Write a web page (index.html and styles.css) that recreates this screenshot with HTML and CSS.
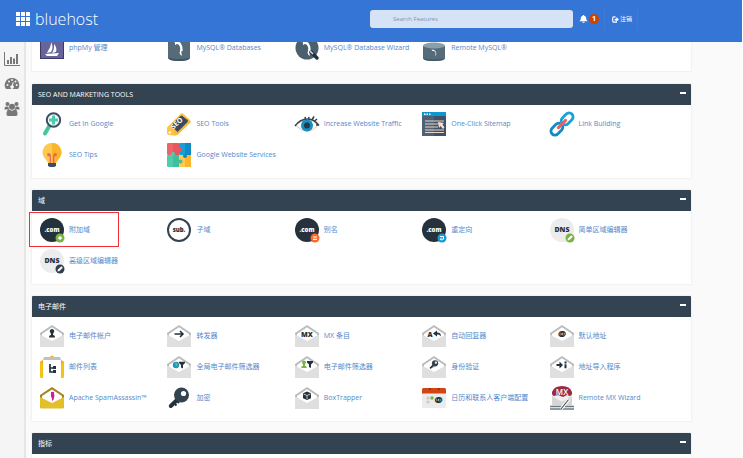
FILE: index.html
```html
<!DOCTYPE html>
<html lang="zh-CN">
<head>
<meta charset="utf-8">
<title>bluehost</title>
<link rel="stylesheet" href="styles.css">
</head>
<body>
<svg class="defs" aria-hidden="true">
  <symbol id="envelope" viewBox="0 0 24 24">
    <path d="M0 9 12 1l12 8v13.500H0z" fill="#bcbcbc"/>
    <path d="M2 10 12 3.300 22 10v7H2z" fill="#fff"/>
    <path d="M0 10.500 12 17l12-6.500V21.500a1.200 1.200 0 0 1-1.200 1.200H1.200A1.200 1.200 0 0 1 0 21.500z" fill="#dfdfdf"/>
  </symbol>
  <symbol id="key" viewBox="0 0 24 24">
    <path d="M12 12 3.800 20" stroke="#22323d" stroke-width="4" stroke-linecap="round" fill="none"/>
    <path d="m7 17 2.500 2.500M9.500 14.500 12 17" stroke="#22323d" stroke-width="2" fill="none"/>
    <circle cx="14.500" cy="9" r="7.500" fill="#34434f"/>
    <circle cx="16.500" cy="7.500" r="2.600" fill="#fff"/>
  </symbol>
  <symbol id="domain" viewBox="0 0 24 24">
    <circle cx="12" cy="12" r="12" fill="#25323c"/>
    <text x="12" y="14" text-anchor="middle" class="mark light">.com</text>
  </symbol>
  <symbol id="dns" viewBox="0 0 24 24">
    <circle cx="12" cy="12" r="12" fill="#ececec"/>
    <text x="12" y="14" text-anchor="middle" class="mark dns">DNS</text>
  </symbol>
  <symbol id="pencil" viewBox="0 0 10 10">
    <path d="M2.500 7.500 3 5.500 6.300 2.200l1.500 1.500L4.500 7z" fill="#fff"/>
  </symbol>
  <symbol id="funnel" viewBox="0 0 6 8"><path d="M0 0h6v1.500L4 3.500V7L2 6V3.500L0 1.500z" fill="#25323c"/></symbol>
  <symbol id="pawn" viewBox="0 0 8 9"><path d="M4 0a2.200 2.200 0 0 1 1.300 4L5 6c1.500 0 2 1 2 2.500H1C1 7 1.500 6 3 6l-.3-2A2.200 2.200 0 0 1 4 0z"/></symbol>
  <symbol id="dolphin" viewBox="0 0 24 24"><path d="M7 5c4-1 7 1 8 5 1 2 0 3 1 5-2-1-2 1-1 5-2-1-3-3-2-5 1-4-1-7-3-7-1 0-1 1-2 1 0-2 0-3-1-4z" fill="#fff"/></symbol>
</svg>

<header class="topbar">
  <a class="brand" href="#">
    <svg class="brand-grid" viewBox="0 0 14 14" aria-hidden="true"><path fill="#fff" d="M0 0h4v4H0zM5 0h4v4H5zM10 0h4v4h-4zM0 5h4v4H0zM5 5h4v4H5zM10 5h4v4h-4zM0 10h4v4H0zM5 10h4v4H5zM10 10h4v4h-4z"/></svg>
    <span>bluehost</span>
  </a>
  <input class="search" type="search" placeholder="Search Features" aria-label="Search Features">
  <button class="alerts" type="button" aria-label="1">
    <svg viewBox="0 0 10 10" aria-hidden="true"><path fill="#fff" d="M5 0.500c.7 0 .8.5.8.8C7.500 1.700 8 3 8 4.500c0 1.500.7 2.300 1.500 3H.5c.8-.7 1.500-1.500 1.500-3C2 3 2.500 1.700 4.200 1.300 4.200 1 4.300.5 5 .5zM3.700 8h2.600a1.300 1.300 0 0 1-2.600 0z"/></svg>
    <span class="badge">1</span>
  </button>
  <a class="logout" href="#">
    <svg viewBox="0 0 8 8" aria-hidden="true"><path fill="none" stroke="#fff" stroke-width="1.300" d="M4 1H2Q.8 1 .8 2.200v3.600Q.8 7 2 7h3V6"/><path fill="#fff" d="M3 3h2V1.200L8 4 5 6.500V5H3z"/></svg>
    <span>注销</span>
  </a>
</header>

<div class="shell">
  <nav class="sidebar">
    <a href="#" aria-label="Statistics"><svg viewBox="0 0 16 14"><path fill="none" stroke="#777" d="M.5 0v13.500H16"/><path fill="#777" d="M3 8h2v4H3zM6 5h2v7H6zM9 6.500h2V12H9zM12 2h2v10h-2z"/></svg></a>
    <a href="#" aria-label="Dashboard"><svg viewBox="0 0 16 14"><path fill="#777" d="M8 1a7 7 0 0 1 6 11H2A7 7 0 0 1 8 1z"/><g fill="#f5f5f5"><circle cx="3.500" cy="8" r="1"/><circle cx="5" cy="4.500" r="1"/><circle cx="8" cy="3" r="1"/><circle cx="11.500" cy="4.500" r="1"/><circle cx="12.700" cy="8" r="1"/><path d="m8.800 5 1 .3-.9 3.200a1.700 1.700 0 1 1-1-.2z"/></g></svg></a>
    <a href="#" aria-label="Users"><svg viewBox="0 0 16 14"><g fill="#777"><circle cx="3.500" cy="2" r="2"/><circle cx="12.500" cy="2" r="2"/><circle cx="8" cy="4.700" r="3"/><path d="M.5 7.500c0-2 .5-3 1.500-3l2.500.3c0 1 .2 1.800.8 2.700zM15.500 7.500c0-2-.5-3-1.500-3l-2.500.3c0 1-.2 1.800-.8 2.700zM2.500 12c0-3 .8-4.500 2.700-4.500C7 9 9 9 10.800 7.500c1.900 0 2.700 1.500 2.700 4.500 0 1-.5 2-1.700 2H4.200c-1.200 0-1.700-1-1.700-2z"/></g></svg></a>
  </nav>

  <main class="content">
    <section class="panel">
      <div class="items">
        <a href="#"><svg viewBox="0 0 24 24"><path d="M0 0h24v23H0z" fill="#3b3a66"/><path d="M1 1h22v21H1z" fill="#66649a"/><path d="M11 6c2 4 2 7 0 10l-4 1c2-4 4-6 4-11zM14 8c2 2 3 5 2 8l-4 1c2-3 2-5 2-9zM5 18l14-1-2 3H7z" fill="#fff"/></svg><span>phpMy 管理</span></a>
        <a href="#"><svg viewBox="0 0 24 24"><path d="M1 4h22v17q0 4-11 4t-11-4z" fill="#566b7a"/><path d="M1 21q3 2 11 2t11-2v1q-1 3-11 3T1 22z" fill="#3f5564"/><use href="#dolphin"/></svg><span>MySQL® Databases</span></a>
        <a href="#"><svg viewBox="0 0 24 24"><circle cx="12" cy="12" r="11.500" fill="#4b606f"/><use href="#dolphin"/><path d="m16 16 6 6" stroke="#25323c" stroke-width="3.500" stroke-linecap="round"/><path d="m15 15 3 3" stroke="#dce3e8" stroke-width="1.500"/></svg><span>MySQL® Database Wizard</span></a>
        <a href="#"><svg viewBox="0 0 24 24"><path d="M1 10h22v12q0 3-11 3T1 22z" fill="#566b7a"/><path d="M1 22q3 1.500 11 1.500T23 22q0 3-11 3T1 22z" fill="#3f5564"/><ellipse cx="12" cy="9.500" rx="11" ry="3" fill="#8aa0a8"/><path d="M9.500 13.500c4 0 6 3 4 7v-4q0-2-3-1.500z" fill="#fff"/></svg><span>Remote MySQL®</span></a>
      </div>
    </section>

    <section class="panel">
      <header><h2>SEO AND MARKETING TOOLS</h2><button type="button" aria-label="Collapse"></button></header>
      <div class="items">
        <a href="#"><svg viewBox="0 0 24 24"><path d="m9 14.500-4 7" stroke="#41c99e" stroke-width="4" stroke-linecap="round"/><circle cx="13.500" cy="8" r="6.700" fill="#f2f9fb" stroke="#3e4d60" stroke-width="2"/><path d="M12 3.500h3v3h3v3h-3v3h-3v-3H9v-3h3z" fill="#4bcbaa"/></svg><span>Get In Google</span></a>
        <a href="#"><svg viewBox="0 0 24 24"><path d="m0 15.500 14-14q1-1 2 0l7 6.500q1.500 1.500 0 3L10 23q-1 .8-2 .8L2 23q-2 0-2-2z" fill="#fdc43f"/><path d="m11 22.500 12.500-12.500-2.500-4L6 21z" fill="#fbb62f"/><path d="m3.500 13.500 10-9.500q1-1 2 0l5 4q1 1 0 2L10.500 20z" fill="#3c4a5c"/><text x="6.500" y="17.500" transform="rotate(-43 6.500 17.500)" class="mark seo">SEO</text><circle cx="2.800" cy="20.500" r="1.200" fill="#fff"/></svg><span>SEO Tools</span></a>
        <a href="#"><svg viewBox="0 0 24 24"><path d="M1 13.500Q12 1 23 13.500 12 25 1 13.500z" fill="#fff" stroke="#e8c6b8"/><path d="M0 14Q5 7 13 7q6 0 11 6.500M10.500 7 10 5m3.500 2 .5-2M17 8l2-3.500m0 5L22 7m-1 6h3" fill="none" stroke="#34434f" stroke-width="1.600"/><circle cx="12" cy="13.500" r="6" fill="#138fc5"/><circle cx="12" cy="13.500" r="3" fill="#273744"/></svg><span>Increase Website Traffic</span></a>
        <a href="#"><svg viewBox="0 0 24 24"><path d="M0 0h24v24H0z" fill="#4e6277"/><path d="M12 3h12v21H12z" fill="#3f5067"/><path d="M0 0h24v4H0z" fill="#0b98ce"/><path d="M2 1.500h1.500V3H2zM4.500 1.500H6V3H4.500zM7 1.500h1.500V3H7z" fill="#fff"/><path d="M3 9h19M3 12h13M3 15h13M3 18h19M3 20.500h19" stroke="#ead3c5" stroke-width="1.200"/><path d="m16 10 6 1-1.500 1.500 2 3-1.500 1.500-2.500-3-1.500 2z" fill="#f9ded1"/></svg><span>One-Click Sitemap</span></a>
        <a href="#"><svg viewBox="0 0 24 24"><g fill="none" stroke-width="2.800" transform="rotate(-45 12 12)"><rect x="-2" y="8" width="13.500" height="8" rx="4" stroke="#0f8dc1"/><rect x="12.500" y="8" width="13.500" height="8" rx="4" stroke="#17a3d8"/><path d="M7 12h10" stroke="#e85f69" stroke-width="3.200" stroke-linecap="round"/></g></svg><span>Link Building</span></a>
        <a href="#"><svg viewBox="0 0 24 24"><path d="M12 0a9.300 9.300 0 0 1 6.500 16l-2.500 4H8l-2.500-4A9.300 9.300 0 0 1 12 0z" fill="#fdca4e"/><path d="M12 0a9.300 9.300 0 0 1 6.500 16L16 20h-4z" fill="#fbb52c"/><path d="M10.300 20v-8.500m3.400 8.500v-8.500M8 11h1.500v1.500H8zm6.500 0H16v1.500h-1.500z" fill="none" stroke="#ea655d" stroke-width="1.300"/><path d="M8 20h8v3l-2 1h-4l-2-1z" fill="#3e4d60"/></svg><span>SEO Tips</span></a>
        <a href="#"><svg viewBox="0 0 24 24"><rect width="12" height="12" rx="1" fill="#ec646c"/><path d="M6 0h6v12H6z" fill="#e8575f"/><rect x="12" width="12" height="12" rx="1" fill="#14a0d8"/><path d="M18 0h6v12h-6z" fill="#0e8cc2"/><rect y="12" width="12" height="12" rx="1" fill="#4dcdad"/><path d="M6 12h6v12H6z" fill="#40bf9c"/><rect x="12" y="12" width="12" height="12" rx="1" fill="#fdc94e"/><path d="M18 12h6v12h-6z" fill="#fbb52e"/><circle cx="13.500" cy="6.500" r="2" fill="#e8575f"/><circle cx="6" cy="11" r="2" fill="#4dcdad"/><circle cx="18" cy="13" r="2" fill="#0e8cc2"/><circle cx="13.500" cy="18.500" r="2" fill="#40bf9c"/></svg><span>Google Website Services</span></a>
      </div>
    </section>

    <section class="panel">
      <header><h2>域</h2><button type="button" aria-label="Collapse"></button></header>
      <div class="items">
        <a href="#" class="highlighted"><svg viewBox="0 0 24 24"><use href="#domain"/><circle cx="20" cy="20" r="4.500" fill="#7ab344"/><path d="M20 18v4m-2-2h4" stroke="#fff" stroke-width="1.300"/></svg><span>附加域</span></a>
        <a href="#"><svg viewBox="0 0 24 24"><circle cx="12" cy="12" r="11" fill="#fff" stroke="#34434f" stroke-width="2"/><text x="12" y="14" text-anchor="middle" class="mark">sub.</text></svg><span>子域</span></a>
        <a href="#"><svg viewBox="0 0 24 24"><use href="#domain"/><circle cx="20" cy="20" r="4.500" fill="#fa6b2b"/><path d="M18 19h4m-4 2.300h4" stroke="#fff" stroke-width="1.200"/></svg><span>别名</span></a>
        <a href="#"><svg viewBox="0 0 24 24"><use href="#domain"/><circle cx="20" cy="20" r="4.500" fill="#179bd7"/><path d="M18 18.500h3.500v2.700H18.500m1-1.200-1.200 1.200 1.200 1.200" fill="none" stroke="#fff"/></svg><span>重定向</span></a>
        <a href="#"><svg viewBox="0 0 24 24"><use href="#dns"/><circle cx="20" cy="20" r="4.500" fill="#7ab344"/><use href="#pencil" x="15" y="15" width="10" height="10"/></svg><span>简单区域编辑器</span></a>
        <a href="#"><svg viewBox="0 0 24 24"><use href="#dns"/><circle cx="20" cy="20" r="4.500" fill="#2f3f4b"/><use href="#pencil" x="15" y="15" width="10" height="10"/></svg><span>高级区域编辑器</span></a>
      </div>
    </section>

    <section class="panel">
      <header><h2>电子邮件</h2><button type="button" aria-label="Collapse"></button></header>
      <div class="items">
        <a href="#"><svg viewBox="0 0 24 24"><use href="#envelope"/><use href="#pawn" x="8" y="5" width="8" height="9" fill="#25323c"/></svg><span>电子邮件帐户</span></a>
        <a href="#"><svg viewBox="0 0 24 24"><use href="#envelope"/><path d="M7.500 10H15m-2-3 3 3-3 3" fill="none" stroke="#25323c" stroke-width="1.600"/></svg><span>转发器</span></a>
        <a href="#"><svg viewBox="0 0 24 24"><use href="#envelope"/><text x="12" y="12.500" text-anchor="middle" class="mark mx">MX</text></svg><span>MX 条目</span></a>
        <a href="#"><svg viewBox="0 0 24 24"><use href="#envelope"/><text x="5.500" y="12.500" class="mark mx">A</text><path d="m11 9.500 4-3v2c3 0 4 1.500 4 4-1-1.500-2-2-4-2v2z" fill="#25323c"/></svg><span>自动回复器</span></a>
        <a href="#"><svg viewBox="0 0 24 24"><use href="#envelope"/><text x="12" y="12.500" text-anchor="middle" class="mark at">@</text></svg><span>默认地址</span></a>
        <a href="#"><svg viewBox="0 0 24 24"><path d="m8 3 4-2.500L16 3v3H8z" fill="#f0a52c"/><path d="M0 8q0-2 3-3h1v18H1.500Q0 23 0 21.500zM24 8q0-2-3-3h-1v18h2.500q1.500 0 1.500-1.500z" fill="#f1c40f"/><path d="M0 8q0-2 4-3v3zM24 8q0-2-4-3v3z" fill="#f0a52c"/><path d="M3 3h18v20H3z" fill="#fff"/><path d="M4 2h16l1 3H3z" fill="#bfc2c4"/><path d="M10 9v8h4m-4-4h4" fill="none" stroke="#25323c" stroke-width="1.700"/><path d="M13 11h3v3h-3zM13 15h3v3h-3z" fill="#25323c"/></svg><span>邮件列表</span></a>
        <a href="#"><svg viewBox="0 0 24 24"><use href="#envelope"/><circle cx="9" cy="10" r="3.200" fill="#1796c5"/><path d="M8 7.500 11 9 9 12z" fill="#6dbb78"/><use href="#funnel" x="12" y="6.500" width="6" height="8"/></svg><span>全局电子邮件筛选器</span></a>
        <a href="#"><svg viewBox="0 0 24 24"><use href="#envelope"/><use href="#pawn" x="5" y="5.500" width="8" height="8" fill="#7ab344"/><use href="#funnel" x="12" y="6" width="6" height="8"/></svg><span>电子邮件筛选器</span></a>
        <a href="#"><svg viewBox="0 0 24 24"><use href="#envelope"/><use href="#key" x="7" y="4.500" width="10" height="10"/></svg><span>身份验证</span></a>
        <a href="#"><svg viewBox="0 0 24 24"><use href="#envelope"/><path d="M6.500 9H9.500V6.500L13 10l-3.500 3.500V11h-3zM14.500 6.500h2v2h-2zM14.500 9.300h2v4h-2z" fill="#25323c"/></svg><span>地址导入程序</span></a>
        <a href="#"><svg viewBox="0 0 24 24"><path d="m0 9 12-8 12 8v13H0z" fill="#a68122"/><path d="m2 10 10-6.500L22 10v7H2z" fill="#fff"/><path d="m0 11 12 6 12-6v10.500q0 1-1.200 1H1.200q-1.200 0-1.200-1z" fill="#e3bf29"/><path d="M11 6q4-1 3 2 1 1 0 4 0 2-2 3V12q-1 0-1-2z" fill="#d6189a"/></svg><span>Apache SpamAssassin™</span></a>
        <a href="#"><svg viewBox="0 0 24 24"><use href="#key"/></svg><span>加密</span></a>
        <a href="#"><svg viewBox="0 0 24 24"><use href="#envelope"/><path d="m12 5.500 4 1.700v5L12 14l-4-1.800v-5z" fill="#25323c"/><path d="m8.500 8 3.500 1.500L15.500 8M12 9.500V13" fill="none" stroke="#fff" stroke-width=".7"/></svg><span>BoxTrapper</span></a>
        <a href="#"><svg viewBox="0 0 24 24"><rect y="2" width="24" height="20" rx="1.500" fill="#ebebeb"/><path d="M0 3.500Q0 2 1.500 2h21Q24 2 24 3.500V7.500H0z" fill="#d34413"/><path d="M7 2h1.500v2H7zM16 2h1.500v2H16z" fill="#842b0c"/><circle cx="6" cy="12" r="1.600" fill="#c9c9c9"/><circle cx="6" cy="16" r="1.600" fill="#c9c9c9"/><circle cx="10" cy="12" r="1.700" fill="#7ab344"/><text x="16.500" y="16.500" text-anchor="middle" class="mark at">@</text></svg><span>日历和联系人客户端配置</span></a>
        <a href="#"><svg viewBox="0 0 24 24"><path d="M2 8 12 3l10 5v12H2z" fill="#efefef"/><path d="m2 10 10 6 10-6v9H2z" fill="#d4d6d7"/><path d="M2 6Q4 0 12 0t10 6q.5 3-2 4l-3-1-4 2-5-2-4 1q-2.500-1-2-4z" fill="#9b2b42"/><text x="12" y="8.500" text-anchor="middle" class="mark wizard">MX</text><path d="M0 20.500h24M0 23h24" stroke="#6c7a80" stroke-width="1.500"/><path d="m11 23 8-10" stroke="#fff" stroke-width="3"/><path d="m11 23 8-10" stroke="#46545b" stroke-width="1.200"/><path d="m18 11 3 2m-3 1 4-3" stroke="#ddd"/></svg><span>Remote MX Wizard</span></a>
      </div>
    </section>

    <section class="panel">
      <header><h2>指标</h2><button type="button" aria-label="Collapse"></button></header>
      <div class="items"></div>
    </section>
  </main>
</div>
</body>
</html>
```

FILE: styles.css
```css
* { box-sizing: border-box; }

html { background: #fff; }

body {
  height: 100vh;
  margin: 0;
  padding-right: 1px;
  overflow: hidden;
  font: 7px/10px "Open Sans", "Noto Sans CJK SC", sans-serif;
  color: #5189cb;
}

a { color: inherit; text-decoration: none; }
button { padding: 0; border: 0; background: none; font: inherit; }
svg { display: block; flex: none; overflow: visible; }
.defs { position: absolute; width: 0; height: 0; }

.topbar {
  position: fixed;
  inset: 0 1px auto 0;
  z-index: 2;
  display: flex;
  align-items: center;
  height: 42px;
  padding: 0 104px 4px 16px;
  background: #3575d6;
  color: #fff;
}

.brand {
  display: flex;
  align-items: center;
  gap: 5px;
  margin-right: auto;
  font-size: 16px;
  font-weight: 300;
  line-height: 24px;
}
.brand-grid { width: 14px; height: 14px; }

.search {
  width: 203px;
  height: 18px;
  padding: 0 23px;
  border: 0;
  border-radius: 3px;
  background: #d6e2f5;
  font: inherit;
  font-size: 6px;
  appearance: none;
}
.search::placeholder { color: #8392ac; opacity: 1; }

.alerts {
  display: flex;
  align-items: center;
  gap: 1px;
  padding: 0 5px 0 6px;
  color: #fff;
}
.alerts svg { width: 9px; height: 10px; }
.badge {
  width: 10px;
  border-radius: 5px;
  background: #cf4200;
  font-size: 7px;
  font-weight: 700;
}

.logout {
  display: flex;
  align-items: center;
  gap: 1px;
  height: 24px;
  padding: 0 5px 0 7px;
  border: solid #3e7ad6;
  border-width: 0 1px;
  font-size: 6px;
}
.logout svg { width: 7px; height: 7px; }

.shell {
  display: flex;
  height: 100%;
  overflow: hidden;
  background: #fafafa;
}

.sidebar {
  display: flex;
  flex: none;
  flex-direction: column;
  gap: 11px;
  width: 26px;
  padding: 52px 0 0 4px;
  border-right: 2px solid #e6e6e6;
  background: #f5f5f5;
}
.sidebar svg { width: 16px; height: 14px; }

.content {
  flex: 1;
  min-width: 0;
  padding: 29px 51px 0 6px;
}

.panel {
  margin-bottom: 12px;
  background: #fff;
  box-shadow: 0 0 1px 1px #f2f2f2;
}
.panel:first-child { margin-bottom: 13px; }

.panel > header {
  display: flex;
  align-items: center;
  justify-content: space-between;
  height: 21px;
  padding: 0 5px 0 6px;
  border-radius: 1px 1px 0 0;
  background: #334352;
  color: #fff;
}
.panel h2 { margin: 0; font: inherit; }
.panel header button {
  width: 6px;
  height: 2px;
  margin-bottom: 3px;
  background: #fff;
}

.items {
  display: grid;
  grid-template-columns: repeat(5, minmax(0, 1fr));
  row-gap: 7px;
  padding: 7px 14px 11px 8px;
}
.items a {
  display: flex;
  align-items: center;
  gap: 5px;
  height: 24px;
  white-space: nowrap;
}
.items a > svg { width: 24px; height: 24px; }

.highlighted { position: relative; }
.highlighted::after {
  content: "";
  position: absolute;
  inset: -6px auto -5px -11px;
  width: 88px;
  border: 1px solid #f22f32;
}

.mark {
  fill: #25323c;
  font: 800 6px/1 "Open Sans", sans-serif;
}
.light { fill: #fff; }
.dns { font-size: 7px; }
.seo { fill: #fff; font-size: 7px; font-weight: 700; }
.mx { font-size: 7px; }
.at { font-size: 9px; }
.wizard { fill: #fff; font-size: 8px; font-weight: 600; }
```
